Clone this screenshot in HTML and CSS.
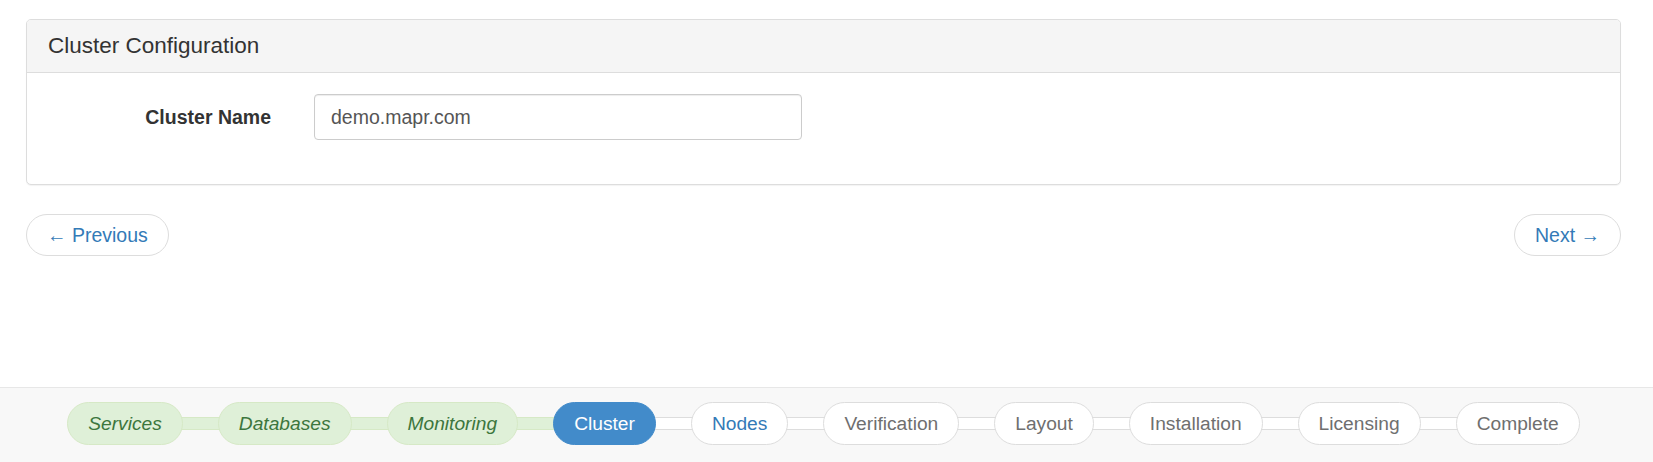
FILE: index.html
```html
<!DOCTYPE html>
<html lang="en">
<head>
<meta charset="utf-8">
<title>Cluster Configuration</title>
<link rel="stylesheet" href="styles.css">
</head>
<body>
<main class="page">
  <section class="panel">
    <div class="panel-heading">
      <h3 class="panel-title">Cluster Configuration</h3>
    </div>
    <div class="panel-body">
      <div class="form-row">
        <label class="form-label" for="cluster-name">Cluster Name</label>
        <input class="form-input" id="cluster-name" type="text" value="demo.mapr.com">
      </div>
    </div>
  </section>
  <nav class="pager">
    <a class="pager-btn" href="#">&larr; Previous</a>
    <a class="pager-btn" href="#">Next &rarr;</a>
  </nav>
</main>
<footer class="wizard">
  <div class="steps">
    <span class="step step-done">Services</span>
    <span class="link link-done"></span>
    <span class="step step-done">Databases</span>
    <span class="link link-done"></span>
    <span class="step step-done">Monitoring</span>
    <span class="link link-done"></span>
    <span class="step step-active">Cluster</span>
    <span class="link"></span>
    <span class="step step-next">Nodes</span>
    <span class="link"></span>
    <span class="step">Verification</span>
    <span class="link"></span>
    <span class="step">Layout</span>
    <span class="link"></span>
    <span class="step">Installation</span>
    <span class="link"></span>
    <span class="step">Licensing</span>
    <span class="link"></span>
    <span class="step">Complete</span>
  </div>
</footer>
</body>
</html>
```

FILE: styles.css
```css
* { box-sizing: border-box; }

html, body {
  margin: 0;
  height: 100%;
}

body {
  display: flex;
  flex-direction: column;
  background: #fff;
  font-family: "Liberation Sans", Arial, Helvetica, sans-serif;
  font-size: 19.5px;
  color: #333;
}

.page {
  padding: 19px 32px 0 26px;
}

.panel {
  border: 1px solid #ddd;
  border-radius: 5px;
  background: #fff;
  box-shadow: 0 1px 1px rgba(0, 0, 0, 0.05);
}

.panel-heading {
  height: 53px;
  padding: 0 21px;
  display: flex;
  align-items: center;
  background: #f5f5f5;
  border-bottom: 1px solid #ddd;
  border-radius: 4px 4px 0 0;
}

.panel-title {
  margin: 0;
  font-size: 22.5px;
  font-weight: normal;
  color: #333;
}

.panel-body {
  padding: 21px 0 44px 0;
}

.form-row {
  display: flex;
  align-items: center;
}

.form-label {
  width: 244px;
  margin-right: 43px;
  text-align: right;
  font-weight: bold;
  color: #333;
}

.form-input {
  width: 488px;
  height: 46px;
  padding: 0 16px;
  border: 1px solid #ccc;
  border-radius: 4px;
  font-family: inherit;
  font-size: 19.5px;
  color: #555;
  background: #fff;
  box-shadow: inset 0 1px 1px rgba(0, 0, 0, 0.075);
  outline: none;
}

.pager {
  display: flex;
  justify-content: space-between;
  margin-top: 29px;
}

.pager-btn {
  display: inline-block;
  height: 42px;
  line-height: 40px;
  padding: 0 20px;
  border: 1px solid #ddd;
  border-radius: 21px;
  background: #fff;
  color: #337ab7;
  text-decoration: none;
}

.wizard {
  margin-top: auto;
  height: 75px;
  padding-top: 14px;
  background: #f8f8f8;
  border-top: 1px solid #e7e7e7;
}

.steps {
  display: flex;
  justify-content: center;
  align-items: center;
  padding-right: 6px;
}

.step {
  position: relative;
  z-index: 1;
  height: 43px;
  line-height: 42px;
  padding: 0 20px;
  border: 1px solid #ddd;
  border-radius: 22px;
  background: #fff;
  color: #6f6f6f;
  font-size: 19.2px;
  white-space: nowrap;
}

.step-done {
  background: #dff0d8;
  border-color: #d6e9c6;
  color: #3c763d;
  font-style: italic;
}

.step-active {
  background: #428bca;
  border-color: #428bca;
  color: #fff;
}

.step-next {
  color: #337ab7;
}

.link {
  width: 45px;
  height: 13px;
  margin: 0 -5px;
  background: #fff;
  border-top: 1px solid #ddd;
  border-bottom: 1px solid #ddd;
}

.link-done {
  background: #dff0d8;
  border-color: #d6e9c6;
}
```
